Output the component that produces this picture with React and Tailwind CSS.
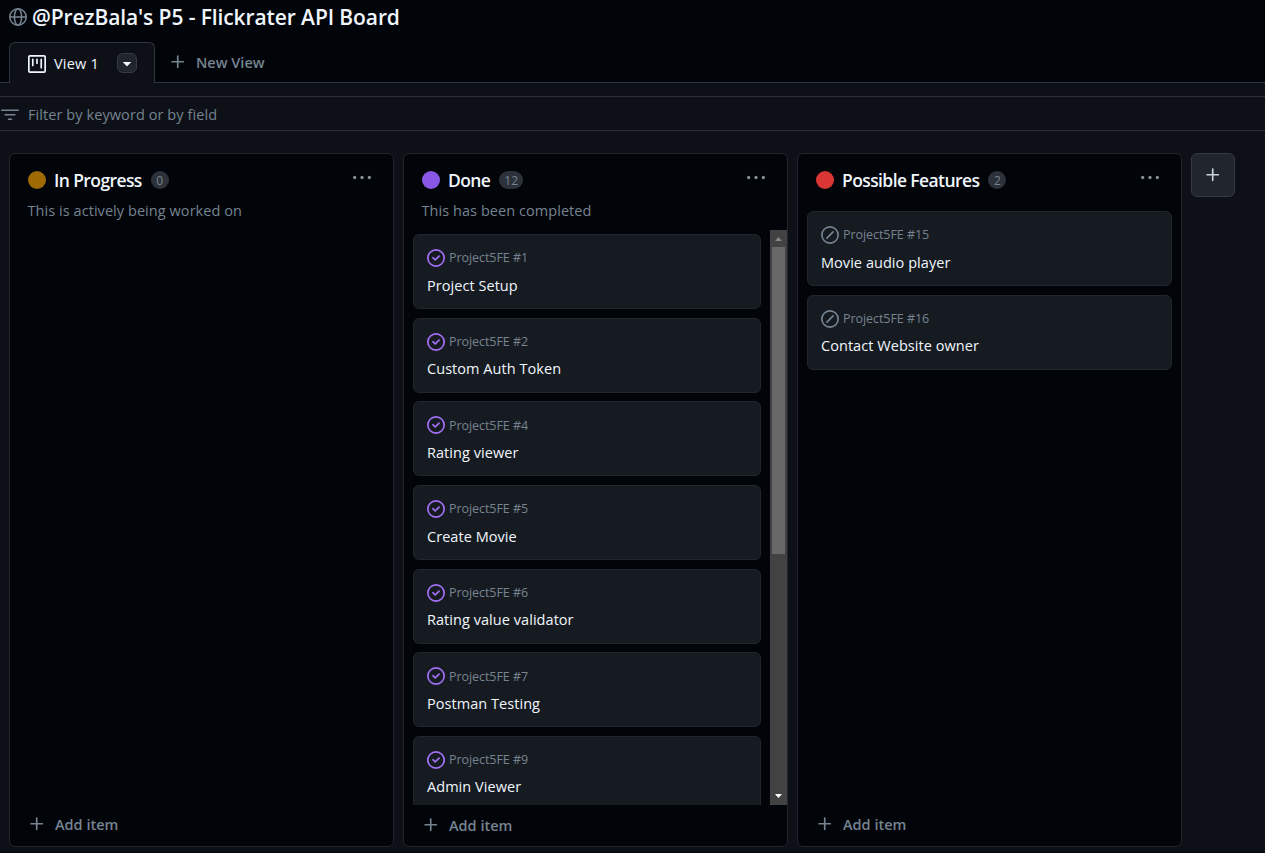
const ICONS = {
  plus: "M7.75 2a.75.75 0 0 1 .75.75V7h4.25a.75.75 0 0 1 0 1.5H8.5v4.25a.75.75 0 0 1-1.5 0V8.5H2.75a.75.75 0 0 1 0-1.5H7V2.75A.75.75 0 0 1 7.75 2Z",
  kebab: "M8 9a1.5 1.5 0 1 0 0-3 1.5 1.5 0 0 0 0 3ZM1.5 9a1.5 1.5 0 1 0 0-3 1.5 1.5 0 0 0 0 3Zm13 0a1.5 1.5 0 1 0 0-3 1.5 1.5 0 0 0 0 3Z",
  filter: "M.75 3h14.5a.75.75 0 0 1 0 1.5H.75a.75.75 0 0 1 0-1.5ZM3 7.75A.75.75 0 0 1 3.75 7h8.5a.75.75 0 0 1 0 1.5h-8.5A.75.75 0 0 1 3 7.75Zm3 4a.75.75 0 0 1 .75-.75h2.5a.75.75 0 0 1 0 1.5h-2.5a.75.75 0 0 1-.75-.75Z",
  project: "M1.75 0h12.5C15.216 0 16 .784 16 1.75v12.5A1.75 1.75 0 0 1 14.25 16H1.75A1.75 1.75 0 0 1 0 14.25V1.75C0 .784.784 0 1.75 0ZM1.5 1.75v12.5c0 .138.112.25.25.25h12.5a.25.25 0 0 0 .25-.25V1.75a.25.25 0 0 0-.25-.25H1.75a.25.25 0 0 0-.25.25ZM11.75 3a.75.75 0 0 1 .75.75v7.5a.75.75 0 0 1-1.5 0v-7.5a.75.75 0 0 1 .75-.75Zm-8.25.75a.75.75 0 0 1 1.5 0v5.5a.75.75 0 0 1-1.5 0ZM8 3a.75.75 0 0 1 .75.75v3.5a.75.75 0 0 1-1.5 0v-3.5A.75.75 0 0 1 8 3Z",
  triangle: "m4.427 7.427 3.396 3.396a.25.25 0 0 0 .354 0l3.396-3.396A.25.25 0 0 0 11.396 7H4.604a.25.25 0 0 0-.177.427Z",
  closed: "M11.28 6.78a.75.75 0 0 0-1.06-1.06L7.25 8.69 5.78 7.22a.75.75 0 0 0-1.06 1.06l2 2a.75.75 0 0 0 1.06 0l3.5-3.5ZM16 8A8 8 0 1 1 0 8a8 8 0 0 1 16 0Zm-1.5 0a6.5 6.5 0 1 0-13 0 6.5 6.5 0 0 0 13 0Z",
  skipped: "M8 0a8 8 0 1 1 0 16A8 8 0 0 1 8 0ZM1.5 8a6.5 6.5 0 1 0 13 0 6.5 6.5 0 0 0-13 0Zm9.78-2.22-5.5 5.5a.749.749 0 0 1-1.275-.326.749.749 0 0 1 .215-.734l5.5-5.5a.751.751 0 0 1 1.042.018.751.751 0 0 1 .018 1.042Z",
};

function Icon({ name, className = "" }) {
  return (
    <svg viewBox="0 0 16 16" fill="currentColor" fillRule="evenodd" className={`size-[18px] shrink-0 ${className}`}>
      <path d={ICONS[name]} />
    </svg>
  );
}

function Globe() {
  return (
    <svg viewBox="0 0 16 16" fill="none" stroke="currentColor" strokeWidth="1.4" className="size-[18px] shrink-0 text-[#768390]">
      <circle cx="8" cy="8" r="7.3" />
      <ellipse cx="8" cy="8" rx="3.2" ry="7.3" />
      <path d="M.8 8h14.4" />
    </svg>
  );
}

const DONE = [
  ["#1", "Project Setup"],
  ["#2", "Custom Auth Token"],
  ["#4", "Rating viewer"],
  ["#5", "Create Movie"],
  ["#6", "Rating value validator"],
  ["#7", "Postman Testing"],
  ["#9", "Admin Viewer"],
];

const POSSIBLE = [
  ["#15", "Movie audio player"],
  ["#16", "Contact Website owner"],
];

function Card({ number, title, icon, iconColor }) {
  return (
    <div className="h-[75px] shrink-0 rounded-md border border-[#21262d] bg-[#161b22] px-[13px] pt-[13px]">
      <div className="flex h-5 items-center gap-1 text-[12.5px] tracking-[-0.06px] text-[#768390]">
        <Icon name={icon} className={iconColor} />
        <span className="pt-[1.5px] whitespace-nowrap">Project5FE {number}</span>
      </div>
      <div className="mt-[5.5px] flex h-6 items-center text-[14.5px] tracking-[0.05px] whitespace-nowrap text-[#f0f6fc]">{title}</div>
    </div>
  );
}

function Column({ dot, title, count, description, footer = "pb-[11px]", children }) {
  return (
    <section className="flex w-[385px] shrink-0 flex-col overflow-hidden rounded-md border border-[#21262d] bg-[#010409]">
      <header className="flex h-[57px] shrink-0 items-start pl-[17.5px] pr-[22px]">
        <div className="mt-[14px] flex h-6 flex-1 items-center">
          <span className={`size-[18px] rounded-full ${dot}`} />
          <h2 className="ml-[8.5px] text-[17.5px] font-semibold tracking-[-0.6px] whitespace-nowrap text-[#f0f6fc]">{title}</h2>
          <span className="ml-[9px] flex h-[18px] min-w-[18px] items-center justify-center rounded-full bg-[#2d3139] px-[5px] text-[12px] text-[#768390]">
            <span className="pt-px">{count}</span>
          </span>
        </div>
        <Icon name="kebab" className="mt-[15px] text-[#848d97]" />
      </header>
      {description && (
        <p className="-mt-[11px] flex h-[22px] shrink-0 items-center pl-[17.5px] text-[14.5px] tracking-[0.06px] text-[#768390]">{description}</p>
      )}
      <div className="flex min-h-0 flex-1 flex-col">{children}</div>
      <footer className={`flex shrink-0 items-end gap-[9px] pl-[18px] text-[#768390] ${footer}`}>
        <Icon name="plus" className="mb-[2px]" />
        <span className="h-5 text-[14.5px] leading-5 font-semibold">Add item</span>
      </footer>
    </section>
  );
}

function Scrollbar() {
  return (
    <div className="flex w-[17px] shrink-0 flex-col items-center bg-[#424242]">
      <svg viewBox="0 0 17 17" className="size-[17px]"><path d="M5 11h7L8.5 7Z" fill="#868686" /></svg>
      <div className="h-[307px] w-[13px] bg-[#686868]" />
      <svg viewBox="0 0 17 17" className="mt-auto size-[17px]"><path d="M5 6h7L8.5 10Z" fill="#fff" /></svg>
    </div>
  );
}

export default function App() {
  return (
    <div className="flex h-[853px] w-[1265px] flex-col overflow-hidden border-b border-[#010409] bg-[#0d1117] font-['Open_Sans','Noto_Sans',sans-serif]">
      <div className="flex h-[83px] shrink-0 flex-col bg-[#010409]">
        <div className="flex h-[34px] items-center gap-[5px] pl-[9px]">
          <Globe />
          <h1 className="pt-[2px] text-[21px] font-semibold tracking-[-0.1px] whitespace-nowrap text-[#f0f6fc]">@PrezBala's P5 - Flickrater API Board</h1>
        </div>
        <nav className="mt-2 flex h-[41px]">
          <div className="w-[9px] border-b border-[#30363d]" />
          <div className="flex w-[146px] items-center rounded-t-md border border-b-0 border-[#30363d] bg-[#0d1117] pl-[17.5px] text-[#f0f6fc]">
            <Icon name="project" className="mt-[2px]" />
            <span className="ml-[8.5px] mt-[2px] w-[63px] text-[14.5px] tracking-[0.2px] whitespace-nowrap">View 1</span>
            <span className="flex size-5 items-center justify-center rounded-md border border-[#363b42] bg-[#21262d] -mt-px">
              <Icon name="triangle" />
            </span>
          </div>
          <div className="flex flex-1 items-center gap-[9px] border-b border-[#30363d] pl-[14px] text-[#768390]">
            <Icon name="plus" />
            <span className="pt-[2px] text-[14.5px] font-semibold">New View</span>
          </div>
        </nav>
      </div>

      <div className="mt-[13px] flex h-[35px] shrink-0 items-center gap-[9px] border-y border-[#2b3037] pl-px text-[#768390]">
        <Icon name="filter" className="mt-[2px]" />
        <span className="mt-[2px] text-[14.5px] tracking-[0.08px]">Filter by keyword or by field</span>
      </div>

      <main className="mt-[22px] flex h-[694px] shrink-0 items-stretch gap-[9px] pl-[9px]">
        <Column dot="bg-[#9e6a03]" title="In Progress" count="0" description="This is actively being worked on" />
        <Column dot="bg-[#8957e5]" title="Done" count="12" description="This has been completed" footer="h-[41px] pb-[10px]">
          <div className="mt-2 flex min-h-0 flex-1">
            <div className="flex min-w-0 flex-1 flex-col gap-[8.65px] overflow-hidden px-[9px] pt-1">
              {DONE.map(([number, title]) => (
                <Card key={number} number={number} title={title} icon="closed" iconColor="text-[#a371f7]" />
              ))}
            </div>
            <Scrollbar />
          </div>
        </Column>
        <Column dot="bg-[#da3633]" title="Possible Features" count="2">
          <div className="flex flex-col gap-[8.65px] px-[9px]">
            {POSSIBLE.map(([number, title]) => (
              <Card key={number} number={number} title={title} icon="skipped" iconColor="text-[#768390]" />
            ))}
          </div>
        </Column>
        <button className="flex size-11 items-center justify-center rounded-md border border-[#363b42] bg-[#21262d] text-[#c9d1d9]">
          <Icon name="plus" />
        </button>
      </main>
    </div>
  );
}
